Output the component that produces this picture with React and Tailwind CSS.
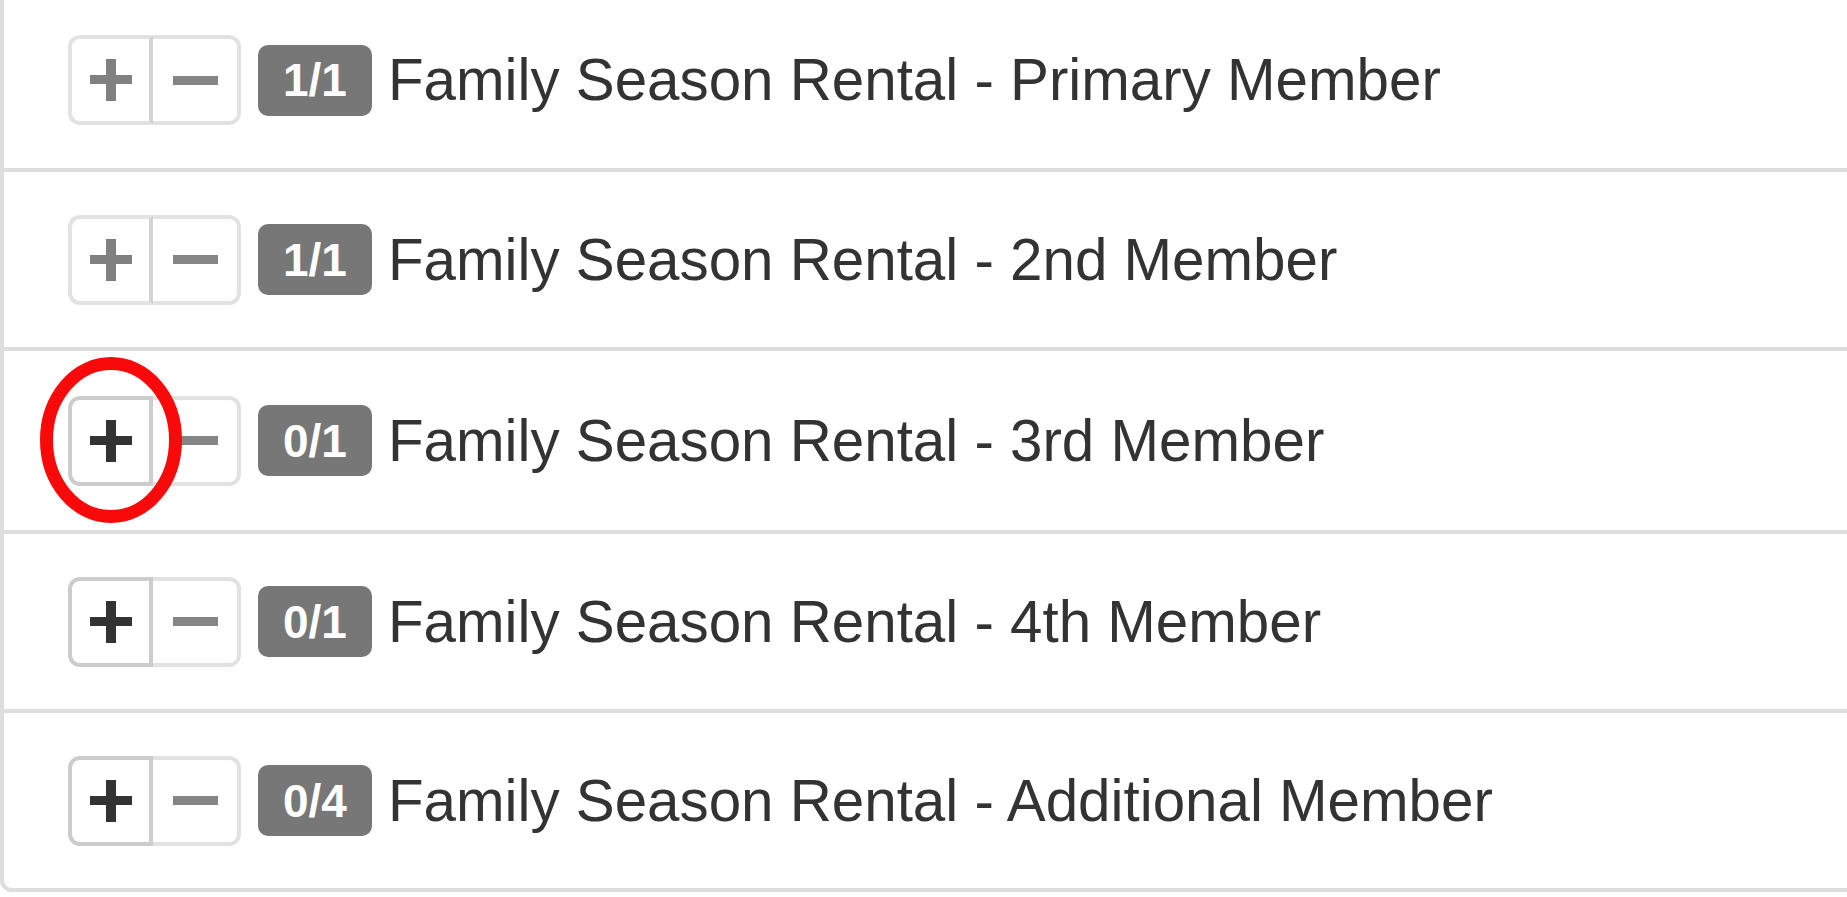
import React from 'react';

const ROWS = [
  { count: '1/1', label: 'Family Season Rental - Primary Member', canAdd: false, h: 'h-[172px] pb-[8px]' },
  { count: '1/1', label: 'Family Season Rental - 2nd Member', canAdd: false, h: 'h-[179px]' },
  { count: '0/1', label: 'Family Season Rental - 3rd Member', canAdd: true, h: 'h-[183px]', circled: true },
  { count: '0/1', label: 'Family Season Rental - 4th Member', canAdd: true, h: 'h-[179px]' },
  { count: '0/4', label: 'Family Season Rental - Additional Member', canAdd: true, h: 'h-[175px]' },
];

function PlusIcon({ color }) {
  return (
    <svg width="42" height="42" viewBox="0 0 42 42">
      <rect x="0" y="16" width="42" height="9" fill={color} />
      <rect x="16" y="0" width="10" height="42" fill={color} />
    </svg>
  );
}

function MinusIcon({ color }) {
  return (
    <svg width="45" height="9" viewBox="0 0 45 9">
      <rect x="0" y="0" width="45" height="9" fill={color} />
    </svg>
  );
}

function QtyButtons({ canAdd }) {
  return (
    <div className="flex">
      <button
        className={`w-[85px] h-[90px] flex items-center justify-center border-4 rounded-l-[12px] bg-white ${
          canAdd ? 'border-[#cccccc]' : 'border-[#e2e2e2] border-r-[#d4d4d4]'
        }`}
      >
        <PlusIcon color={canAdd ? '#333333' : '#808080'} />
      </button>
      <button className="w-[88px] h-[90px] flex items-center justify-center border-4 border-l-0 border-[#e2e2e2] rounded-r-[12px] bg-white">
        <MinusIcon color="#858585" />
      </button>
    </div>
  );
}

export default function App() {
  return (
    <div className="w-[1847px] h-[897px] overflow-hidden bg-white font-['Liberation_Sans',Arial,sans-serif]">
      <div className="border-l-4 border-b-4 border-[#dddddd] rounded-bl-[12px]">
        {ROWS.map((row, i) => (
          <div
            key={i}
            className={`relative flex items-center pl-[64px] ${row.h} ${i < ROWS.length - 1 ? 'border-b-4 border-[#dddddd]' : ''}`}
          >
            <QtyButtons canAdd={row.canAdd} />
            <span className="ml-[17px] h-[71px] px-[25px] flex items-center rounded-[10px] bg-[#777777] text-white font-bold text-[46px] leading-none">
              {row.count}
            </span>
            <span className="ml-[16px] text-[58.3px] text-[#333333] whitespace-nowrap">{row.label}</span>
            {row.circled && (
              <svg className="absolute left-[36px] top-[6px]" width="142" height="166" viewBox="0 0 142 166">
                <ellipse cx="71" cy="83" rx="64.5" ry="76.5" fill="none" stroke="#f80a0a" strokeWidth="13" />
              </svg>
            )}
          </div>
        ))}
      </div>
    </div>
  );
}
